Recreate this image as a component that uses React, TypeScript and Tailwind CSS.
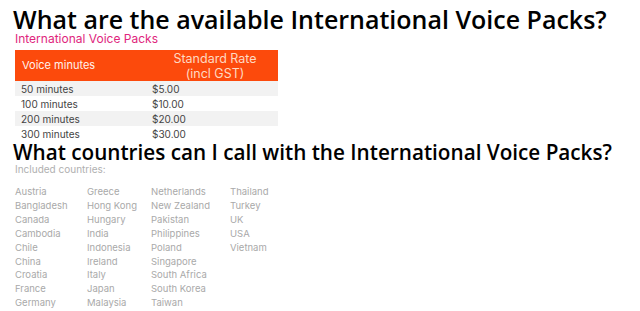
const rows = [
  ["50 minutes", "$5.00"],
  ["100 minutes", "$10.00"],
  ["200 minutes", "$20.00"],
  ["300 minutes", "$30.00"],
];

const countries = [
  ["Austria", "Bangladesh", "Canada", "Cambodia", "Chile", "China", "Croatia", "France", "Germany"],
  ["Greece", "Hong Kong", "Hungary", "India", "Indonesia", "Ireland", "Italy", "Japan", "Malaysia"],
  ["Netherlands", "New Zealand", "Pakistan", "Philippines", "Poland", "Singapore", "South Africa", "South Korea", "Taiwan"],
  ["Thailand", "Turkey", "UK", "USA", "Vietnam"],
];

const colWidths = ["w-[72px]", "w-[64px]", "w-[79px]", "w-[60px]"];

export default function App() {
  return (
    <div className="w-[640px] h-[311px] bg-white overflow-hidden pl-[13px] pt-[5px] font-['Inter',sans-serif]">
      <h1 className="font-['Open_Sans',sans-serif] font-semibold text-[25px] leading-[28px] text-black whitespace-nowrap">
        What are the available International Voice Packs?
      </h1>
      <div className="pl-[2px] text-[12px] leading-[12px] text-[#e0267d]">International Voice Packs</div>

      <table className="ml-[2px] mt-[5px] w-[263px] border-collapse text-[10px]">
        <thead>
          <tr className="bg-[#fc4a0c] h-[31px]">
            <th className="w-[137px] text-left font-normal pl-[7px] text-[11px] text-[#fff3ec]">Voice minutes</th>
            <th className="text-center font-normal text-[12.5px] leading-[15px] text-[#ffd9c2]">
              Standard Rate
              <br />
              (incl GST)
            </th>
          </tr>
        </thead>
        <tbody>
          {rows.map((r, i) => (
            <tr key={r[0]} className={i % 2 === 0 ? "bg-[#f2f2f2] h-[15px]" : "bg-white h-[15px]"}>
              <td className="pl-[6px] text-[#444444] leading-[14px]">{r[0]}</td>
              <td className="text-[#444444] leading-[14px]">{r[1]}</td>
            </tr>
          ))}
        </tbody>
      </table>

      <h2 className="font-['Open_Sans',sans-serif] font-semibold text-[20.7px] leading-[22px] text-black whitespace-nowrap">
        What countries can I call with the International Voice Packs?
      </h2>
      <div className="pl-[2px] text-[10px] leading-[12px] text-[#b0b0b0]">Included countries:</div>

      <div className="flex pl-[2px] mt-[10px]">
        {countries.map((col, i) => (
          <div key={i} className={`${colWidths[i]} flex flex-col`}>
            {col.map((c) => (
              <div key={c} className="text-[9.5px] leading-[13.9px] text-[#a9a9a9] whitespace-nowrap">
                {c}
              </div>
            ))}
          </div>
        ))}
      </div>
    </div>
  );
}
